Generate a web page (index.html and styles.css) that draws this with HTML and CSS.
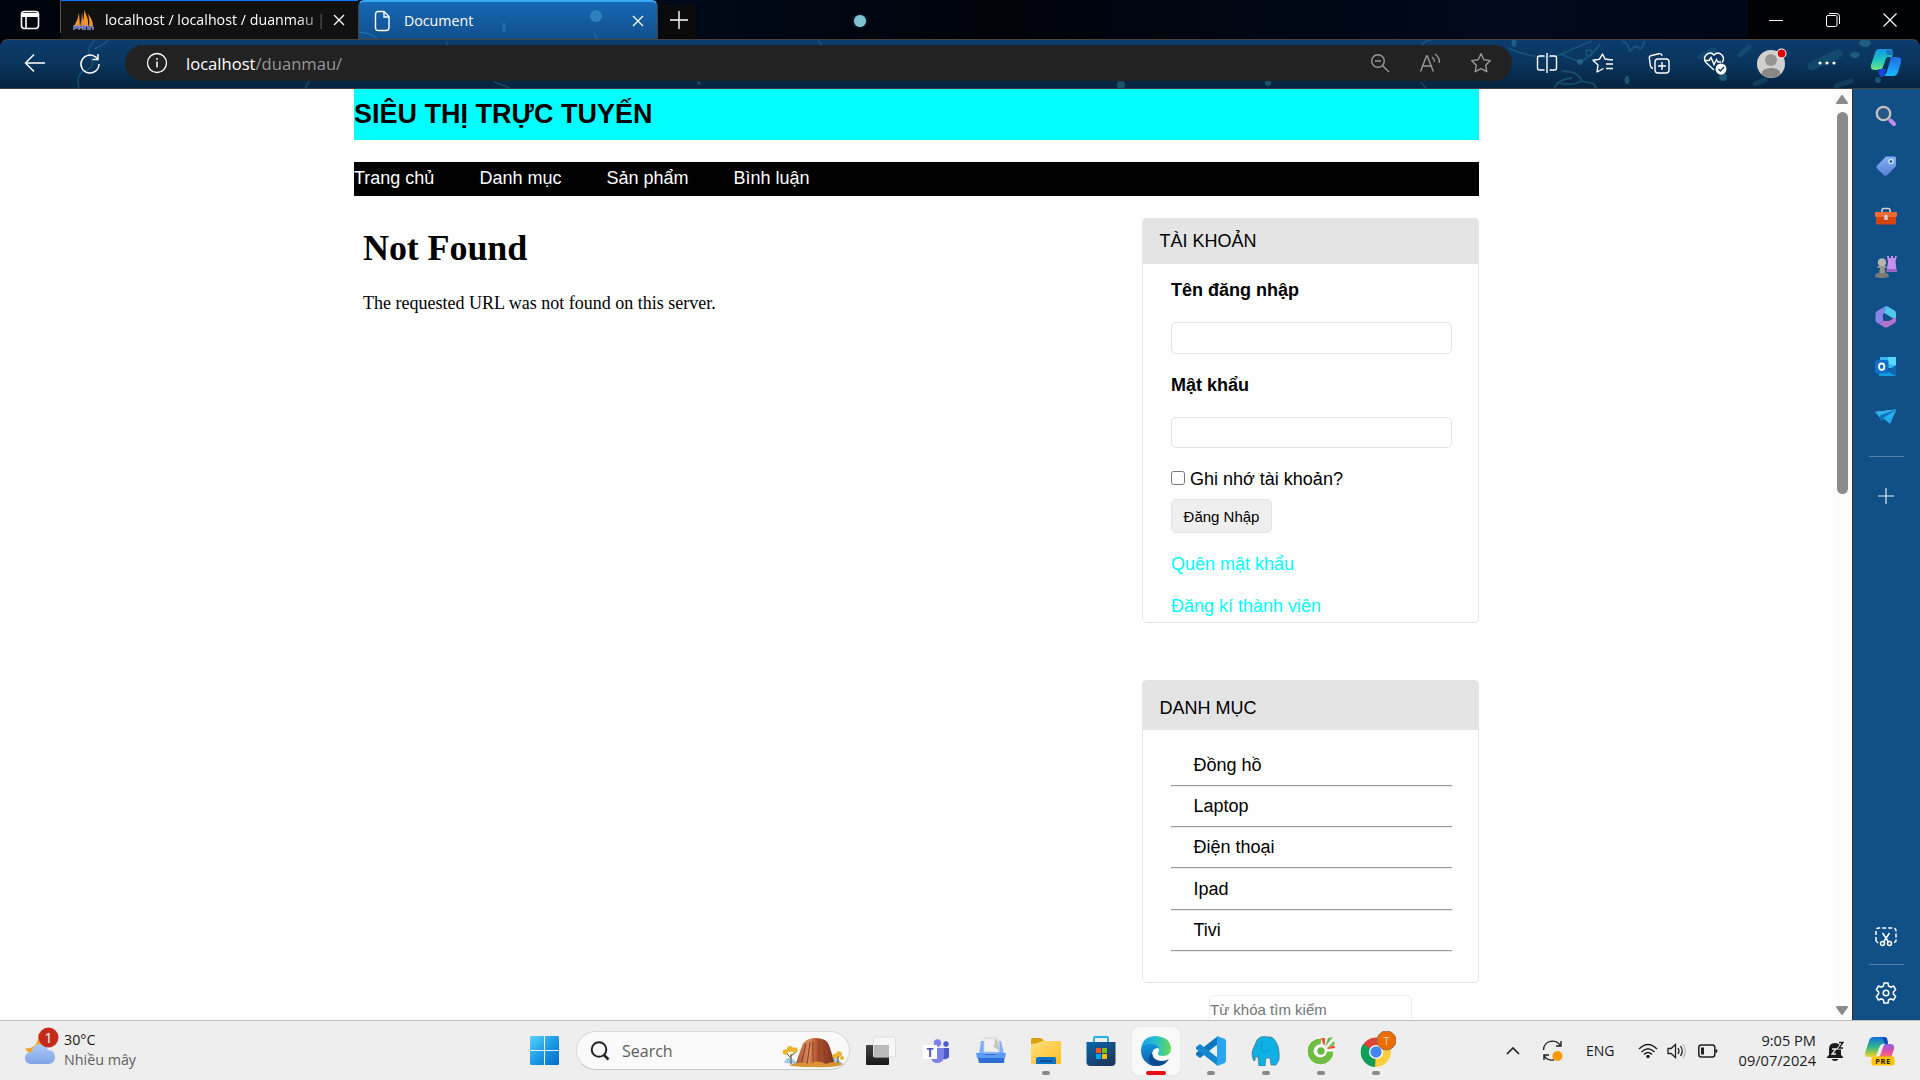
FILE: index.html
```html
<!DOCTYPE html>
<html lang="vi">
<head>
<meta charset="utf-8">
<title>Document</title>
<link rel="stylesheet" href="styles.css">
</head>
<body>
<div class="desktop">

<header class="tabstrip">
  <div class="workspace"><svg width="20" height="20" viewBox="0 0 20 20" fill="none" stroke="#fff" stroke-width="1.6"><rect x="1.5" y="1.5" width="17" height="17" rx="3"/><path d="M2 5h16" stroke-width="4"/><path d="M6 5v13"/></svg></div>
  <div class="tab">
    <svg class="favicon" width="22" height="22" viewBox="0 0 22 22"><path d="M1 17Q5 11 6 4l1 13zM8 17Q12 9 11 1q5 9 4 16zM16 17q1-5-1-12 5 6 5 12z" fill="#f79521"/><path d="M7 17Q9 11 9 3l2 14z" fill="#d8883a"/><path d="M1 21v-4h3v2H2m4 2v-4l2 2 2-2v4m2 0v-4h3v4m2 0v-3h3v3" fill="none" stroke="#8b90cf" stroke-width="1.5"/></svg>
    <span class="tab-title clipped">localhost / localhost / duanmau |</span>
    <svg class="close" width="12" height="12" viewBox="0 0 12 12"><path d="M1 1l10 10M11 1L1 11" stroke="#fff" stroke-width="1.3"/></svg>
  </div>
  <div class="tab active">
    <svg class="tab-art" width="299" height="39" viewBox="0 0 299 39" fill="none"><circle cx="237" cy="14" r="6" fill="#3f9ad0" opacity=".6"/><path d="M145 21v9" stroke="#43a3d5" stroke-width="3" opacity=".3"/><path d="M0 30q14 1 20 9M235 31l4 8" stroke="#419bd0" opacity=".5"/></svg>
    <svg class="favicon" width="18" height="22" viewBox="0 0 18 22" fill="none" stroke="#fff" stroke-width="1.4"><path d="M4 1.5h6l5 5v11a3 3 0 0 1-3 3H4a2.500 2.500 0 0 1-2.500-2.500V4A2.500 2.500 0 0 1 4 1.500zM10 2v5h5"/></svg>
    <span class="tab-title">Document</span>
    <svg class="close" width="12" height="12" viewBox="0 0 12 12"><path d="M1 1l10 10M11 1L1 11" stroke="#fff" stroke-width="1.3"/></svg>
  </div>
  <div class="new-tab"><svg width="18" height="18" viewBox="0 0 18 18"><path d="M9 0v18M0 9h18" stroke="#fff" stroke-width="1.4"/></svg></div>
  <i class="theme-bubble"></i>
  <div class="window-controls">
    <svg width="14" height="14" viewBox="0 0 14 14"><path d="M0 7.500h14" stroke="#fff"/></svg>
    <svg width="14" height="14" viewBox="0 0 14 14" fill="none" stroke="#fff"><rect x=".5" y="2.500" width="10.500" height="11" rx="1.500"/><path d="M3 .500h7.500a3 3 0 0 1 3 3V11"/></svg>
    <svg width="14" height="14" viewBox="0 0 14 14"><path d="M.5.500l13 13M13.500.500l-13 13" stroke="#fff" stroke-width="1.200"/></svg>
  </div>
</header>

<div class="toolbar">
  <svg class="toolbar-art" width="1920" height="48" viewBox="0 0 1920 48" fill="none" stroke="#2a7d99" stroke-width="1.500">
    <g opacity=".42"><path d="M95 0q-10 9-4 18t-9 14q-6 5-3 16M108 0q-4 5-14 9M310 41q-4 3-4 7M494 42l16 6M447 1q-2 3 3 6M818 0q1 3 4 5M1422 5q2-5 10-5M1421 42q2 4 5 6"/>
    <path d="M1508 8q34 15 56 5t28-12M1560 14l20 8q14-8 20-18M1572 38q-14 1-18 10M1562 31q16 0 20 10l12 3 2 4M1582 41q-12 6-26 1M1622 1l5 3 3 7 5-5 6 3 4-8" stroke-width="1.800"/><circle cx="1589" cy="13" r="3"/></g>
    <g fill="#2f8297" stroke="none" opacity=".5"><ellipse cx="1514" cy="3" rx="2.500" ry="4"/><circle cx="1580" cy="22" r="3"/><ellipse cx="1627" cy="40" rx="2.500" ry="4"/><circle cx="1723" cy="37" r="4"/><ellipse cx="1865" cy="3" rx="6" ry="4"/><ellipse cx="1855" cy="15" rx="5" ry="3"/><circle cx="1878" cy="40" r="3"/><circle cx="1121" cy="45" r="4"/><circle cx="1268" cy="43" r="3"/><circle cx="699" cy="43" r="1.500"/></g>
    <g stroke="#2a7894" opacity=".28" stroke-linecap="round"><path d="M1812 26l26-12" stroke-width="9"/><path d="M1836 46l15-5M1700 17l14-7M1755 44l10-4M1740 15l9-8" stroke-width="5"/></g>
  </svg>
  <div class="nav-buttons">
    <svg width="22" height="20" viewBox="0 0 22 20" fill="none" stroke="#fff" stroke-width="1.500"><path d="M10 1.500L1.500 10l8.500 8.500M2 10h19"/></svg>
    <svg width="22" height="22" viewBox="0 0 22 22" fill="none" stroke="#fff" stroke-width="1.500"><path d="M20 11a9 9 0 1 1-3-6.700L19 6.500M19 1v5.500h-5.500"/></svg>
  </div>
  <div class="omnibox">
    <svg width="22" height="22" viewBox="0 0 22 22" fill="none" stroke="#fff" stroke-width="1.300"><circle cx="11" cy="11" r="9.500"/><path d="M11 9.500v6M11 6v1.800" stroke-width="1.500"/></svg>
    <span class="url"><b>localhost</b>/duanmau/</span>
    <div class="omni-icons">
      <svg width="20" height="20" viewBox="0 0 20 20" fill="none" stroke="#999" stroke-width="1.400"><circle cx="8" cy="8" r="6.300"/><path d="M12.700 12.700L19 19M5 8h6"/></svg>
      <svg width="22" height="20" viewBox="0 0 22 20" fill="none" stroke="#999" stroke-width="1.400"><path d="M1.500 18.500L7.500 3h.8l6 15.500M4 13h8M13 4q2.500 2 2.500 5M16 1q4.500 3 4.500 9"/></svg>
      <svg width="22" height="22" viewBox="0 0 22 22" fill="none" stroke="#999" stroke-width="1.400" stroke-linejoin="round"><path d="M11 1.700l2.900 6 6.500.9-4.700 4.600 1.100 6.500-5.800-3.100-5.800 3.100 1.100-6.500L1.600 8.600l6.500-.9z"/></svg>
    </div>
  </div>
  <div class="actions">
    <span class="action"><svg width="22" height="20" viewBox="0 0 22 20" fill="none" stroke="#fff" stroke-width="1.400"><path d="M8.500 3h-5a2 2 0 0 0-2 2v10a2 2 0 0 0 2 2h5M13.500 3h5a2 2 0 0 1 2 2v10a2 2 0 0 1-2 2h-5M11 0v20"/></svg></span>
    <span class="action"><svg width="22" height="22" viewBox="0 0 22 22" fill="none" stroke="#fff" stroke-width="1.400" stroke-linejoin="round"><path d="M11.500 16.500L5 20l1-7-5-4.800 6.500-1L10.500 2l2.500 5 5 .8h3M14 12h7M14 16.500h7"/></svg></span>
    <span class="action"><svg width="22" height="22" viewBox="0 0 22 22" fill="none" stroke="#fff" stroke-width="1.400"><path d="M5 16.500Q3 16 2.500 14L1.300 6Q1 4 3.500 3.500L11 1.700q2.500-.5 3.200 2"/><rect x="7" y="7" width="14" height="14" rx="3"/><path d="M14 10v8M10 14h8"/></svg></span>
    <span class="action"><svg width="24" height="24" viewBox="0 0 24 24" fill="none" stroke="#fff" stroke-width="1.400"><path d="M11 19L3 11.500Q0 8 3 4q4.500-4 8 0 3.500-4 8 0 3 4 0 7.500M1 9.500h5l2-3 3 7 2.500-5 1.500 2.500h3"/><circle cx="18" cy="18" r="5.500" fill="#fff" stroke="none"/><path d="M15.500 18l2 2 3.500-4" stroke="#123c66"/></svg></span>
    <span class="action"><svg width="32" height="32" viewBox="0 0 32 32"><circle cx="16" cy="17" r="14" fill="#d2d0ce"/><circle cx="16" cy="13" r="6" fill="#979593"/><path d="M6.500 27Q7 21 16 21t9.500 6A14 14 0 0 1 6.500 27z" fill="#8a8886"/><circle cx="26.500" cy="6.500" r="5" fill="#fff"/><circle cx="26.500" cy="6.500" r="4" fill="#e00000"/></svg></span>
    <span class="action"><svg width="18" height="4" viewBox="0 0 18 4" fill="#fff"><circle cx="2" cy="2" r="1.600"/><circle cx="9" cy="2" r="1.600"/><circle cx="16" cy="2" r="1.600"/></svg></span>
    <span class="action wide"><svg width="30" height="28" viewBox="0 0 30 28"><defs><linearGradient id="cp1" x2="0" y2="1"><stop stop-color="#1497e8"/><stop offset=".55" stop-color="#20c8bd"/><stop offset="1" stop-color="#72e47f"/></linearGradient><linearGradient id="cp2" x2="0" y2="1"><stop stop-color="#226be0"/><stop offset="1" stop-color="#17b9ff"/></linearGradient></defs><path d="M8 0h11q3 0 3 4l-1 4h-4q-2 0-3 4l-2 6q-1 3-4 3H4q-5 0-4-5L4 4q1-4 4-4z" fill="url(#cp1)"/><path d="M15 1h4q3 0 3 5h-6z" fill="#1777b9"/><path d="M7 20h8l-1 4q-1 4-3 4-3 0-3-4z" fill="#1749d4"/><path d="M19 8h7q5 0 4 5l-3 10q-1 4-5 4h-9q2-1 3-5l3-10q1-4 0-4z" fill="url(#cp2)"/></svg></span>
  </div>
</div>

<div class="browser-body">
  <main class="viewport">
    <div class="container">
      <div class="site-header"><h1>SIÊU THỊ TRỰC TUYẾN</h1></div>
      <nav class="menu"><a>Trang chủ</a><a>Danh mục</a><a>Sản phẩm</a><a>Bình luận</a></nav>
      <div class="columns">
        <section class="content">
          <h2>Not Found</h2>
          <p>The requested URL was not found on this server.</p>
        </section>
        <aside class="side">
          <div class="box account">
            <div class="box-title">TÀI KHOẢN</div>
            <form class="login">
              <label>Tên đăng nhập</label>
              <input class="field" type="text">
              <label>Mật khẩu</label>
              <input class="field short" type="password">
              <div class="remember"><input type="checkbox"><span>Ghi nhớ tài khoản?</span></div>
              <button type="button">Đăng Nhập</button>
              <a>Quên mật khẩu</a>
              <a>Đăng kí thành viên</a>
            </form>
          </div>
          <div class="box categories">
            <div class="box-title">DANH MỤC</div>
            <ul><li>Đồng hồ</li><li>Laptop</li><li>Điện thoại</li><li>Ipad</li><li>Tivi</li></ul>
          </div>
          <input class="keyword" type="text" placeholder="Từ khóa tìm kiếm">
        </aside>
      </div>
    </div>
  </main>
  <div class="scrollbar">
    <svg width="14" height="10" viewBox="0 0 14 10"><path d="M7 1l5 7H2z" fill="#8b8b8b" stroke="#8b8b8b" stroke-width="2" stroke-linejoin="round"/></svg>
    <i class="thumb"></i>
    <svg class="down" width="14" height="10" viewBox="0 0 14 10"><path d="M7 9l5-7H2z" fill="#8b8b8b" stroke="#8b8b8b" stroke-width="2" stroke-linejoin="round"/></svg>
  </div>
  <aside class="edgebar">
    <span class="edge-cell"><svg width="22" height="22" viewBox="0 0 22 22" fill="none"><path d="M14 14l2 2" stroke="#aaa" stroke-width="2"/><circle cx="8.500" cy="8.500" r="6.700" stroke="#c4c1bd" stroke-width="2.300" fill="#26568a"/><path d="M15.500 15.500l3.500 3.500" stroke="#c58bef" stroke-width="4" stroke-linecap="round"/></svg></span>
    <span class="edge-cell"><svg width="22" height="22" viewBox="0 0 22 22"><defs><linearGradient id="tg" x2="0" y2="1"><stop stop-color="#86b1f2"/><stop offset="1" stop-color="#5580d8"/></linearGradient></defs><path d="M11 1.500h8.500q1.500 0 1.500 1.500v8l-9 9.200q-1.500 1.300-3 0L2 13.500q-1.500-1.300 0-3z" fill="url(#tg)"/><circle cx="16" cy="6.500" r="2" fill="#124a82" stroke="#d4e7ff" stroke-width="1.300"/></svg></span>
    <span class="edge-cell"><svg width="22" height="18" viewBox="0 0 22 18"><path d="M7 6V3q0-1.500 1.500-1.500h5Q15 1.500 15 3v3" fill="none" stroke="#cfcfcf" stroke-width="1.600"/><rect y="5" width="22" height="5" rx="1" fill="#f26b34"/><path d="M1 10h20v6q0 1.500-1.500 1.500h-17Q1 17.500 1 16z" fill="#d84312"/><rect x="9.200" y="8" width="3.600" height="5" rx="1" fill="#ccc"/></svg></span>
    <span class="edge-cell"><svg width="22" height="24" viewBox="0 0 22 24"><path d="M12 1h2v2h2V1h2v2h2V1h2l-1.500 5 1 11H11.500l1.500-10z" fill="#c391ed"/><path d="M12 14h10v3H12z" fill="#9566c7"/><circle cx="7" cy="7.500" r="4.200" fill="#b8b4b1"/><path d="M2.500 11h9v2h-2l1 6H4l1-6H2.500z" fill="#999490"/><path d="M0 22q0-4 4-4h6q4 0 4 4-7 2-14 0z" fill="#7c7875"/></svg></span>
    <span class="edge-cell"><svg width="22" height="22" viewBox="0 0 22 22"><path d="M10.500.300Q9.500 3 9 7l-1 7.500L4 18l-2-1.200Q.5 16 .5 14V8q0-2 1.700-3z" fill="#8a84e8"/><path d="M10.500.300q1.300-.4 2.500.4L19.500 4.500q1.500 1 1.500 3V14l-7-4-5-3z" fill="#50c8ee"/><path d="M21 11v3.500q0 1.800-1.500 2.700L13 21q-2 1-4 0l-5-3 4.500-3.500L14 15z" fill="#b272cd"/><path d="M9 7l5 3v5l-5.500-.5L7.500 10z" fill="#124f87"/></svg></span>
    <span class="edge-cell"><svg width="22" height="20" viewBox="0 0 22 20"><path d="M6 0h14q1 0 1 1v10H5V1q0-1 1-1z" fill="#35b8f1"/><path d="M13 0h8v9l-8-2z" fill="#55d7ff"/><path d="M4 9l9 5 8-5v10H4z" fill="#159ade"/><path d="M12 14l9-6v11z" fill="#1264ac"/><rect y="3" width="13.500" height="13.500" rx="1.500" fill="#0c70ca"/><ellipse cx="6.700" cy="9.700" rx="2.700" ry="3.200" fill="none" stroke="#fff" stroke-width="1.800"/></svg></span>
    <span class="edge-cell"><svg width="22" height="16" viewBox="0 0 22 16"><path d="M0 3L21 .500 9 7.500z" fill="#67dafc"/><path d="M0 3l5 6 16-8.500z" fill="#2fb0e8"/><path d="M5 6.500l16-6L9 11l-3.500 1z" fill="#0c71b7"/><path d="M8 9L21.500.500 15 15z" fill="#25adeb"/></svg></span>
    <i class="edge-rule"></i>
    <span class="edge-add"><svg width="16" height="16" viewBox="0 0 16 16"><path d="M8 0v16M0 8h16" stroke="#e5edf5" stroke-width="1.200"/></svg></span>
    <span class="edge-shot"><svg width="22" height="20" viewBox="0 0 22 20" fill="none" stroke="#fff" stroke-width="1.500"><path d="M1 14V4q0-3 3-3h14q3 0 3 3v10l-2 2M1 14l2 2" stroke-dasharray="4 2"/><path d="M7.500 6l6 9M14.500 6l-6 9"/><circle cx="7.500" cy="16.500" r="2"/><circle cx="14.500" cy="16.500" r="2"/></svg></span>
    <i class="edge-rule low"></i>
    <span class="edge-gear"><svg width="22" height="22" viewBox="0 0 22 22" fill="none" stroke="#fff" stroke-width="1.500" stroke-linejoin="round"><path d="M9 1h4l.6 3 2 1.200L18.500 4l2.200 3.600L18.400 10v2l2.300 2.400-2.200 3.600-2.900-1.200-2 1.200L13 21H9l-.6-3-2-1.200L3.500 18l-2.200-3.600L3.600 12v-2L1.300 7.600 3.500 4l2.900 1.200 2-1.200z"/><circle cx="11" cy="11" r="2.800"/></svg></span>
  </aside>
</div>

<footer class="taskbar">
  <div class="weather">
    <svg width="36" height="40" viewBox="0 0 36 40"><defs><linearGradient id="cl" x2="0" y2="1"><stop stop-color="#aecbf8"/><stop offset="1" stop-color="#7fa4e8"/></linearGradient></defs><path d="M13 7q1 8-3 12T0 22q2 5 8 6h10V14z" fill="#f5a524"/><path d="M7 38q-7 0-7-6t7-6q1-8 8-8 6 0 8 6 7 0 7 7 0 7-7 7z" fill="url(#cl)"/><circle cx="23.500" cy="11.500" r="10" fill="#c42b1c"/><text x="23.500" y="16.500" font-size="14" fill="#fff" text-anchor="middle">1</text></svg>
    <div class="weather-text"><span>30°C</span><span class="muted">Nhiều mây</span></div>
  </div>
  <svg class="start" width="29" height="29" viewBox="0 0 29 29"><defs><linearGradient id="wn" x2="1" y2="1"><stop stop-color="#5ad3ff"/><stop offset=".5" stop-color="#1d9be5"/><stop offset="1" stop-color="#0069c9"/></linearGradient></defs><path d="M1 0h13v14H0V1zM15 0h13l1 1v13H15zM0 15h14v14H1l-1-1zM15 15h14v13l-1 1H15z" fill="url(#wn)"/></svg>
  <div class="search">
    <svg width="20" height="20" viewBox="0 0 20 20" fill="none" stroke="#222" stroke-width="2"><circle cx="9" cy="8.500" r="7.300"/><path d="M14 14l4.500 4.500" stroke-width="2.500"/></svg>
    <span>Search</span>
    <svg class="rock" width="62" height="31" viewBox="0 0 62 31"><defs><linearGradient id="rk"><stop stop-color="#a65232"/><stop offset=".35" stop-color="#df8b5d"/><stop offset=".55" stop-color="#b4552e"/><stop offset="1" stop-color="#762e1d"/></linearGradient></defs><path d="M2 26q3-8 10-3l4 4zM48 27l3-9 10 9z" fill="#9dc9ed"/><path d="M13 29q3-9 6-17Q21 4 27 2q7-2 13 0 6 1 8 9 3 9 5 17z" fill="url(#rk)"/><path d="M19 27l5-20M25 28l3-23M31 27V4M37 27V3M44 27L41 5" stroke="#8a4128" stroke-width="1.100"/><path d="M7 28q12-4 20-1 9-5 17 0 8-4 17 0-6 4-30 3-20 0-24-2z" fill="#d99534"/><path d="M9 27V17m0 4l-5-5m5 3l5-4M56 26v-9m0 4l-4-4m4 3l4-3" stroke="#754019" fill="none"/><g fill="#edb52d"><circle cx="3.500" cy="15" r="2.800"/><circle cx="8" cy="12" r="3"/><circle cx="13" cy="13" r="2.800"/><circle cx="53" cy="19" r="2.500"/><circle cx="57" cy="17" r="2.800"/><circle cx="60" cy="21" r="2"/></g></svg>
  </div>
  <div class="apps">
    <span class="app"><svg width="30" height="30" viewBox="0 0 30 30"><defs><linearGradient id="tv" x2="0" y2="1"><stop stop-color="#444"/><stop offset="1" stop-color="#191919"/></linearGradient></defs><rect y="9" width="23" height="20" rx="1" fill="url(#tv)"/><rect x="7.500" y="1" width="22" height="20" rx="1" fill="#f7f7f7" fill-opacity=".8" stroke="#ddd"/><path d="M8 9h15v12H8z" fill="#bababa"/></svg></span>
    <span class="app"><svg width="28" height="26" viewBox="0 0 28 26"><circle cx="15.500" cy="5" r="3.700" fill="#7b83eb"/><circle cx="24" cy="6" r="2.700" fill="#5059c9"/><path d="M20 10h7v9q-2 3-6 2z" fill="#5059c9"/><path d="M9 10h13v9q-1 6-7 6-5 0-6-5z" fill="#7b83eb"/><rect x="1" y="7" width="14" height="14" fill="#fff"/><text x="8" y="18.500" font-size="12" font-weight="700" fill="#4b53bc" text-anchor="middle">T</text></svg></span>
    <span class="app"><svg width="30" height="28" viewBox="0 0 30 28"><path d="M5 4h20l3 13H3z" fill="#7cb0ff"/><path d="M8 1h12q5 1 3 14H8z" fill="#f0f0f0" stroke="#ccc" stroke-width=".7"/><path d="M18 1q6 3 5 13-4-4-6-4 3-4 1-9z" fill="#c4c4c4"/><path d="M1 17h28l-1 9H3z" fill="#2c6ed3"/><path d="M0 16h8l2 2h10l2-2h8l-1 5H1z" fill="#5c9bf5"/></svg></span>
    <span class="app running"><svg width="30" height="28" viewBox="0 0 30 28"><defs><linearGradient id="fo" x2="1" y2="1"><stop stop-color="#ffe17d"/><stop offset="1" stop-color="#ffbd22"/></linearGradient></defs><path d="M1 1h8q2 0 4 3v6H0V2z" fill="#dca00d"/><path d="M0 7q6 0 11-3h18l1 1v22H0z" fill="url(#fo)"/><path d="M5 27v-5q0-2 2-2h16q2 0 2 2v5z" fill="#0873c5"/><path d="M9 24h12" stroke="#063b7c" stroke-width="1.300"/></svg></span>
    <span class="app"><svg width="30" height="30" viewBox="0 0 30 30"><defs><linearGradient id="st" x2=".7" y2="1"><stop stop-color="#0967ad"/><stop offset="1" stop-color="#1c355c"/></linearGradient></defs><path d="M8 7V2q0-1 1-1h12q1 0 1 1v5" fill="none" stroke="#27b2ed" stroke-width="2"/><path d="M.5 6h29v20q0 4-4 4h-21q-4 0-4-4z" fill="url(#st)"/><path d="M10 12h5v5h-5z" fill="#f35325"/><path d="M16 12h5v5h-5z" fill="#81bc06"/><path d="M10 18h5v5h-5z" fill="#05a6f0"/><path d="M16 18h5v5h-5z" fill="#ffba08"/></svg></span>
    <span class="app current"><svg width="30" height="30" viewBox="0 0 30 30"><defs><linearGradient id="e1"><stop stop-color="#1a9ee6"/><stop offset=".5" stop-color="#26bfd0"/><stop offset="1" stop-color="#65dc4c"/></linearGradient><linearGradient id="e2" x2="0" y2="1"><stop stop-color="#1594dc"/><stop offset="1" stop-color="#0b5bad"/></linearGradient></defs><path d="M0 14Q1 0 15 0q14 1 15 12 0 8-8 8-6 0-5-3 3-5-3-6Q6 8 0 14z" fill="url(#e1)"/><path d="M0 14q3-7 10-6 6 0 8 4-6-1-7 6 0 8 8 11-8 3-14-3Q0 22 0 14z" fill="url(#e2)"/><path d="M11 17q1 8 10 8 4 0 7-2-5 8-14 7-7-2-6-8 0-3 3-5z" fill="#0c4a92"/></svg></span>
    <span class="app running"><svg width="30" height="30" viewBox="0 0 30 30"><path d="M22 0v8L4 22l-4-3v-2z" fill="#0b76bd"/><path d="M0 11l4-3 18 14v8L0 13z" fill="#1388ce"/><path d="M21 0l8 3 1 2v20l-1 2-8 3z" fill="#2ba5ef"/></svg></span>
    <span class="app running"><svg width="30" height="30" viewBox="0 0 30 30"><path d="M6 4Q10-1 17 1q5-1 8 5 4 6 3 18l-3 5h-5l-1-7h-4l-1 8H8l-1-9H4q1 4-1 4Q-1 18 3 11z" fill="#0eb0e6" stroke="#376776" stroke-width=".6"/><path d="M12 5q-4 7 0 11 4 1 6-3M7 8l-2 3" fill="none" stroke="#0b8bb8" stroke-width=".8"/></svg></span>
    <span class="app running"><svg width="30" height="30" viewBox="0 0 30 30"><path d="M16 2A13.500 13.500 0 1 0 28 15h-8a6 6 0 1 1-5-6z" fill="#70bd45" stroke="#fff"/><circle cx="15" cy="15" r="6" fill="#fff"/><circle cx="15" cy="15" r="3.700" fill="#68b944"/><path d="M15 2l4 0 0 7-2-1zM21 12l7-3 1 3-7 1z" fill="#f15336"/><path d="M22 2l5-1-8 10zM28 5l1 3-8 4z" fill="#67bd46"/></svg></span>
    <span class="app running"><svg class="chrome" width="40" height="40" viewBox="0 0 40 40"><path d="M20 21L7 14A15 15 0 0 1 33 14l-2 3z" fill="#db4437"/><path d="M20 21L7 13A15 15 0 0 0 19 36l8-11z" fill="#0f9d58"/><path d="M20 21l13-7A15 15 0 0 1 19 36z" fill="#ffcd40"/><circle cx="20" cy="21" r="7" fill="#fff"/><circle cx="20" cy="21" r="5.700" fill="#4285f4"/><circle cx="30.500" cy="9.500" r="9.500" fill="#ed6c02" stroke="#98714f"/><text x="30.500" y="13.500" font-size="11" fill="#f4d5bd" text-anchor="middle">T</text></svg></span>
  </div>
  <div class="tray">
    <svg class="chev" width="14" height="8" viewBox="0 0 14 8"><path d="M1 7l6-6 6 6" fill="none" stroke="#222" stroke-width="1.700"/></svg>
    <svg class="sync" width="22" height="22" viewBox="0 0 22 22" fill="none" stroke="#222" stroke-width="1.400"><path d="M1.500 10a9 9 0 0 1 17-4M19 1v5h-5M12 20Q5 21 2 15.500M2 20v-5h5"/><circle cx="15.500" cy="16" r="5" fill="#ff9800" stroke="none"/></svg>
    <span class="lang">ENG</span>
    <svg class="wifi" width="20" height="16" viewBox="0 0 20 16" fill="none" stroke="#222" stroke-width="1.400"><path d="M1 6q9-9 18 0M3.500 9q6.500-6.500 13 0M6 11.500q4-4 8 0"/><circle cx="10" cy="13.500" r="1.700" fill="#222" stroke="none"/></svg>
    <svg class="sound" width="20" height="16" viewBox="0 0 20 16" fill="none" stroke="#222" stroke-width="1.300"><path d="M1 5.500h3L8.500 1.500v13L4 10.500H1zM11 5q2 3 0 6M13.500 3q3.500 5 0 10"/><path d="M16 1q4.500 7 0 14" stroke="#bbb"/></svg>
    <svg class="battery" width="20" height="14" viewBox="0 0 20 14"><rect x=".8" y="1" width="16" height="12" rx="2.500" fill="none" stroke="#222" stroke-width="1.500"/><path d="M3 3.500h3v7H3zM17.500 5q2 0 2 2t-2 2z" fill="#222"/></svg>
    <div class="clock"><span>9:05 PM</span><span>09/07/2024</span></div>
    <svg class="bell" width="18" height="20" viewBox="0 0 18 20"><path d="M3 14V8q0-6 6-6 6 0 6 6v6l2 2v1H1v-1zM5.500 18h7q-1 2-3.500 2t-3.500-2z" fill="#1b1b1b"/><path d="M6 8h4l-4 5h4" fill="none" stroke="#eee" stroke-width="1.300"/><path d="M13 1.500h4L13 7h4" fill="none" stroke="#eee" stroke-width="3"/><path d="M13 1.500h4L13 7h4" fill="none" stroke="#1b1b1b" stroke-width="1.300"/></svg>
    <svg class="copilot" width="30" height="30" viewBox="0 0 30 30"><defs><linearGradient id="c3" x2="0" y2="1"><stop stop-color="#146cdf"/><stop offset=".5" stop-color="#30b889"/><stop offset="1" stop-color="#f6d422"/></linearGradient><linearGradient id="c4" x2="0" y2="1"><stop stop-color="#8962ee"/><stop offset=".5" stop-color="#df4fa7"/><stop offset="1" stop-color="#ff7a59"/></linearGradient></defs><path d="M9 1h10q4 0 3 4l-1 3q-5-1-7 4l-2 6q-1 3-4 3H4q-4 0-4-4L4 5q1-4 5-4z" fill="url(#c3)"/><path d="M17 1h2q4 0 4 7h-3z" fill="#0c48c5"/><path d="M20 8h5q5 0 4 5l-3 9H12q3-1 4-5l2-6q1-3 2-3z" fill="url(#c4)"/><rect x="6.500" y="20.500" width="23" height="9" rx="2" fill="#ffc400"/><text x="18" y="27.700" font-size="7.500" font-weight="700" letter-spacing=".5" fill="#222" text-anchor="middle">PRE</text></svg>
  </div>
</footer>
</div>
</body>
</html>
```
FILE: styles.css
```css
* { box-sizing: border-box; }
body { margin: 0; background: #fff; overflow: hidden; }
svg { display: block; flex: none; }
.desktop { width: 1920px; height: 1080px; display: flex; flex-direction: column; background: #00050f; font-family: "Open Sans", "Noto Sans", sans-serif; }

/* tab strip */
.tabstrip { height: 39px; display: flex; background: linear-gradient(90deg, #00040c, #00040c 50px, #000917 700px, #00030a 1000px, #000a1c 1500px, #000612); position: relative; }
.workspace { width: 61px; padding: 10px 0 0 20px; border-right: 1px solid #555; margin-bottom: 6px; }
.tab { width: 297px; height: 39px; display: flex; align-items: center; padding: 0 12px 0 12px; background: #111; color: #fff; border-top: 1px solid #0b78ff; font-size: 14.200px; }
.tab .favicon { margin-right: 10px; }
.tab-title { flex: 1; white-space: nowrap; padding-bottom: 1px; }
.tab-title.clipped { overflow: hidden; letter-spacing: .03px; -webkit-mask-image: linear-gradient(90deg, #000 88%, transparent 104%); mask-image: linear-gradient(90deg, #000 88%, transparent 104%); }
.tab .close { margin-left: 10px; margin-right: 1px; }
.tab.active { width: 300px; padding: 0 13px 0 15px; border: 1px solid #4a403a; border-top: 2px solid #38a8f5; border-bottom: 0; border-radius: 6px 6px 0 0; background: linear-gradient(#1768b4, #114f8d); position: relative; }
.tab.active .favicon { margin-right: 12px; }
.tab.active .close { margin-right: 0; }
.tab-art { position: absolute; left: 0; top: 0; }
.new-tab { width: 34px; height: 33px; margin: 5px 0 0 4px; background: #0b0b0b; display: flex; align-items: center; justify-content: center; padding-bottom: 4px; }
.theme-bubble { position: absolute; left: 854px; top: 15px; width: 12px; height: 12px; border-radius: 50%; background: #7fc3d2; box-shadow: 0 0 2px #2b7798; }
.window-controls { width: 172px; margin-left: auto; padding-left: 21px; display: flex; align-items: center; gap: 43px; background: #000104; }

/* toolbar */
.toolbar { height: 50px; display: flex; align-items: center; position: relative; border-top: 1px solid #4b413b; border-bottom: 1px solid #40403e; border-radius: 8px 8px 0 0; background: linear-gradient(#0c3c6e, #09345c 50%, #06243f); }
.toolbar-art { position: absolute; left: 0; top: 0; }
.nav-buttons { width: 125px; display: flex; gap: 33px; padding-left: 24px; position: relative; }
.omnibox { width: 1387px; height: 36px; margin-bottom: 2px; border-radius: 18px; background: #222; display: flex; align-items: center; padding-left: 21px; position: relative; }
.url { flex: 1; margin-left: 18px; font-size: 16.600px; color: #969696; }
.url b { color: #fff; font-weight: 400; }
.omni-icons { display: flex; align-items: center; gap: 29px; padding-right: 20px; }
.actions { display: flex; padding-left: 7px; margin-bottom: 2px; position: relative; }
.action { width: 56px; height: 36px; display: flex; align-items: center; justify-content: center; }
.action.wide { width: 62px; }

.browser-body { height: 931px; display: flex; background: #fff; }
.viewport { width: 1833px; height: 931px; overflow: hidden; padding-left: 354px; }

/* shop page */
.container { width: 1125px; font: 18px/20px "Liberation Sans", Arial, sans-serif; color: #000; }
.site-header { height: 51px; padding-top: 10px; background: cyan; }
.site-header h1 { margin: 0; font-size: 27px; line-height: 31px; }
.menu { display: flex; gap: 45px; height: 34px; margin-top: 22px; background: #000; color: #fff; line-height: 32px; }
.columns { display: flex; justify-content: space-between; margin-top: 22px; }
.content { padding-left: 9px; font-family: "Liberation Serif", "Times New Roman", serif; }
.content h2 { margin: 9px 0 0; font-size: 36px; line-height: 42px; letter-spacing: -.1px; }
.content p { margin: 24px 0 0; }
.side { width: 337px; display: flex; flex-direction: column; }
.box { border: 1px solid #e4e4e4; border-radius: 5px; }
.box-title { padding-left: 16.500px; background: #e4e4e4; }
.account { height: 405px; }
.account .box-title { height: 45px; line-height: 44px; }
.login { display: flex; flex-direction: column; align-items: flex-start; padding: 16px 26px 0 28px; }
.login label { font-weight: 700; }
.field { width: 281px; height: 32px; margin: 22px 0 21px; border: 1px solid #e3e3e3; border-radius: 5px; background: #fff; }
.field.short { height: 31px; }
.remember { display: flex; align-items: center; gap: 5px; height: 20px; }
.remember input { width: 14px; height: 14px; margin: 0 0 2px; }
.login button { width: 101px; height: 34px; margin: 10px 0 21px; padding: 0; border: 1px solid #e3e3e3; border-radius: 5px; background: #efefef; color: #000; font: 15px "Liberation Sans", Arial, sans-serif; }
.login a { color: cyan; margin-bottom: 22px; }
.categories { height: 303px; margin-top: 57px; }
.categories .box-title { height: 49px; padding-top: 17px; }
.categories ul { list-style: none; margin: 15.500px 26px 0 28px; padding: 0; }
.categories li { height: 41.250px; padding: 9.250px 0 0 22.500px; border-bottom: 1px solid #eee; box-shadow: inset 0 -1px #999; }
.keyword { width: 203px; height: 39px; margin: 12px 0 0 67px; padding: 0 1px 11px 0; border: 1px solid #eee; border-radius: 5px; font: 15px "Liberation Sans", Arial, sans-serif; outline: 0; }
.keyword::placeholder { color: #757575; }

.scrollbar { width: 19px; background: #fcfcfc; display: flex; flex-direction: column; padding: 6px 0 5px 2px; }
.thumb { width: 11px; height: 382px; margin: 7px 0 0 2px; border-radius: 6px; background: #8b8b8b; }
.scrollbar .down { margin-top: auto; }

/* Edge sidebar */
.edgebar { width: 68px; border-left: 1px solid #333; background: #114f87; display: flex; flex-direction: column; align-items: center; padding: 2px 1px 0 0; }
.edge-cell { height: 50.200px; display: flex; align-items: center; }
.edge-rule { width: 35px; height: 1px; margin-top: 14px; background: #587fa8; }
.edge-add { margin-top: 31px; }
.edge-shot { margin-top: 423px; }
.edge-rule.low { margin-top: 17px; }
.edge-gear { margin-top: 17px; }

/* taskbar */
.taskbar { height: 60px; border-top: 1px solid #bdbdbd; background: #eee; display: flex; align-items: center; color: #1b1b1b; }
.weather { width: 530px; height: 59px; display: flex; padding: 5px 0 0 25px; }
.weather-text { display: flex; flex-direction: column; margin: 4px 0 0 3px; font-size: 14.300px; line-height: 20px; }
.muted { color: #606060; }
.search { width: 274px; height: 39px; margin-left: 17px; border: 1px solid #d8d8d8; border-bottom-color: #c6c6c6; border-radius: 20px; background: #fafafa; display: flex; align-items: center; padding: 0 5px 0 13px; font-size: 16px; color: #5c5c5c; }
.search span { margin-left: 12px; flex: 1; }
.rock { margin-top: 3px; }
.apps { display: flex; gap: 7px; margin-left: 7px; }
.app { width: 48px; height: 48px; border-radius: 6px; display: flex; align-items: center; justify-content: center; position: relative; }
.app.current { background: #f9f9f9; box-shadow: 0 0 1px #bbb; }
.running::after, .current::after { content: ""; position: absolute; left: 20px; bottom: 0; width: 8px; height: 4px; border-radius: 2px; background: #888; }
.current::after { left: 14px; width: 20px; background: #f00b16; }
.tray { flex: 1; height: 59px; display: flex; align-items: center; padding-left: 106px; }
.sync { margin-left: 22px; }
.lang { width: 31px; margin-left: 22px; font-size: 14px; white-space: nowrap; }
.wifi { margin-left: 21px; }
.sound { margin-left: 9px; }
.battery { margin-left: 11px; }
.clock { width: 98px; display: flex; flex-direction: column; align-items: flex-end; margin-top: -1px; font-size: 14.600px; line-height: 20px; }
.bell { margin-left: 10px; }
.copilot { margin-left: 21px; }
```
